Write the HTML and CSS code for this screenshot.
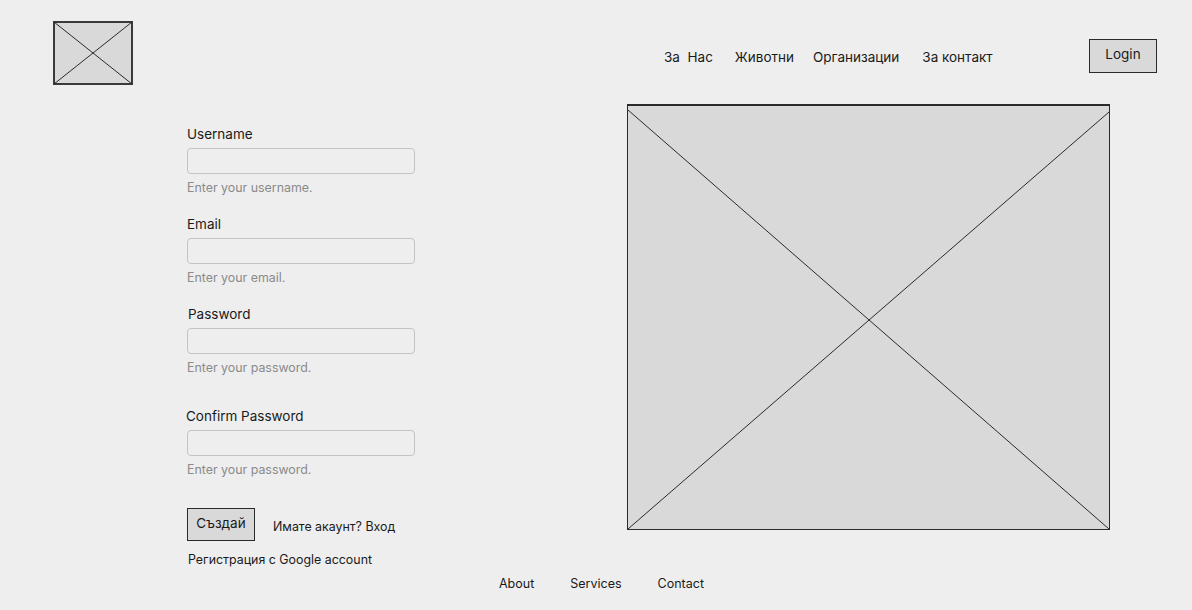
FILE: index.html
```html
<!DOCTYPE html>
<html lang="bg">
<head>
<meta charset="utf-8">
<title>Регистрация</title>
<link rel="stylesheet" href="styles.css">
</head>
<body>
<header class="header">
  <div class="logo">
    <svg width="80" height="64" viewBox="0 0 80 64" preserveAspectRatio="none">
      <rect x="1" y="1" width="78" height="62" fill="#d9d9d9" stroke="#3a3a3a" stroke-width="2"/>
      <line x1="1" y1="1" x2="79" y2="63" stroke="#2a2a2a" stroke-width="1"/>
      <line x1="79" y1="1" x2="1" y2="63" stroke="#2a2a2a" stroke-width="1"/>
    </svg>
  </div>
  <nav class="nav">
    <a class="nav-link nav-1">За&nbsp; Нас</a>
    <a class="nav-link nav-2">Животни</a>
    <a class="nav-link nav-3">Организации</a>
    <a class="nav-link">За контакт</a>
  </nav>
  <button class="login-btn">Login</button>
</header>
<main class="main">
  <form class="form">
    <div class="field">
      <label class="label">Username</label>
      <input class="input" type="text">
      <span class="hint">Enter your username.</span>
    </div>
    <div class="field">
      <label class="label">Email</label>
      <input class="input" type="text">
      <span class="hint">Enter your email.</span>
    </div>
    <div class="field">
      <label class="label label-pw">Password</label>
      <input class="input" type="password">
      <span class="hint">Enter your password.</span>
    </div>
    <div class="field field-confirm">
      <label class="label label-confirm">Confirm Password</label>
      <input class="input" type="password">
      <span class="hint">Enter your password.</span>
    </div>
    <div class="actions">
      <button class="create-btn" type="button">Създай</button>
      <a class="have-account">Имате акаунт? Вход</a>
    </div>
    <a class="google">Регистрация с Google account</a>
  </form>
  <div class="picture">
    <svg width="483" height="426" viewBox="0 0 483 426" preserveAspectRatio="none">
      <rect x="0.5" y="0.5" width="482" height="425" fill="#d9d9d9" stroke="#2a2a2a" stroke-width="1"/>
      <line x1="0.5" y1="1" x2="482.5" y2="1" stroke="#2a2a2a" stroke-width="2"/>
      <line x1="1" y1="6" x2="482" y2="425" stroke="#2a2a2a" stroke-width="1"/>
      <line x1="482" y1="8" x2="1" y2="425" stroke="#2a2a2a" stroke-width="1"/>
    </svg>
  </div>
</main>
<footer class="footer">
  <a class="footer-link">About</a>
  <a class="footer-link">Services</a>
  <a class="footer-link">Contact</a>
</footer>
</body>
</html>
```
FILE: styles.css
```css
* { box-sizing: border-box; }
html, body {
  margin: 0;
  padding: 0;
  background: #eeeeee;
  font-family: Inter, "Noto Sans", sans-serif;
  color: #1a1a1a;
}
.header {
  display: flex;
  align-items: flex-start;
  padding: 21px 35px 0 53px;
  height: 84px;
}
.logo svg { display: block; }
.nav {
  display: flex;
  margin-left: 531px;
  margin-top: 26px;
  font-size: 13.5px;
  line-height: 20px;
}
.nav-1 { margin-right: 22px; }
.nav-2 { margin-right: 19px; }
.nav-3 { margin-right: 23px; }
.login-btn {
  margin-left: auto;
  margin-top: 18px;
  width: 68px;
  height: 34px;
  background: #d9d9d9;
  border: 1px solid #2a2a2a;
  font-family: inherit;
  font-size: 13.5px;
  color: #1a1a1a;
  padding: 0 0 4px;
}
.main {
  display: flex;
  align-items: flex-start;
  margin-top: 20px;
}
.form {
  width: 228px;
  margin-left: 187px;
  padding-top: 22px;
  display: flex;
  flex-direction: column;
}
.field {
  display: flex;
  flex-direction: column;
  height: 90px;
}
.field-confirm { margin-top: 12px; height: 100px; }
.label {
  font-size: 13.5px;
  line-height: 17px;
  margin-bottom: 5px;
}
.label-pw { margin-left: 1px; }
.label-confirm { margin-left: -1px; }
.input {
  width: 228px;
  height: 26px;
  border: 1px solid #c4c4c4;
  border-radius: 4px;
  background: #eeeeee;
  margin: 0;
}
.hint {
  font-size: 12.4px;
  line-height: 16px;
  color: #8a8a8a;
  margin-top: 6px;
}
.actions {
  display: flex;
  align-items: center;
}
.create-btn {
  width: 68px;
  height: 33px;
  background: #d9d9d9;
  border: 1px solid #2a2a2a;
  font-family: inherit;
  font-size: 13.5px;
  color: #1a1a1a;
  padding: 0 0 4px;
}
.have-account {
  font-size: 12.4px;
  margin-left: 18px;
  margin-top: 3px;
}
.google {
  font-size: 12.4px;
  line-height: 15px;
  margin-top: 11px;
  margin-left: 1px;
}
.picture {
  margin-left: 212px;
}
.picture svg { display: block; }
.footer {
  display: flex;
  justify-content: center;
  gap: 36px;
  font-size: 12.5px;
  line-height: 15px;
  margin-top: 9px;
  padding-left: 11px;
}
.footer-link { white-space: nowrap; }
```
